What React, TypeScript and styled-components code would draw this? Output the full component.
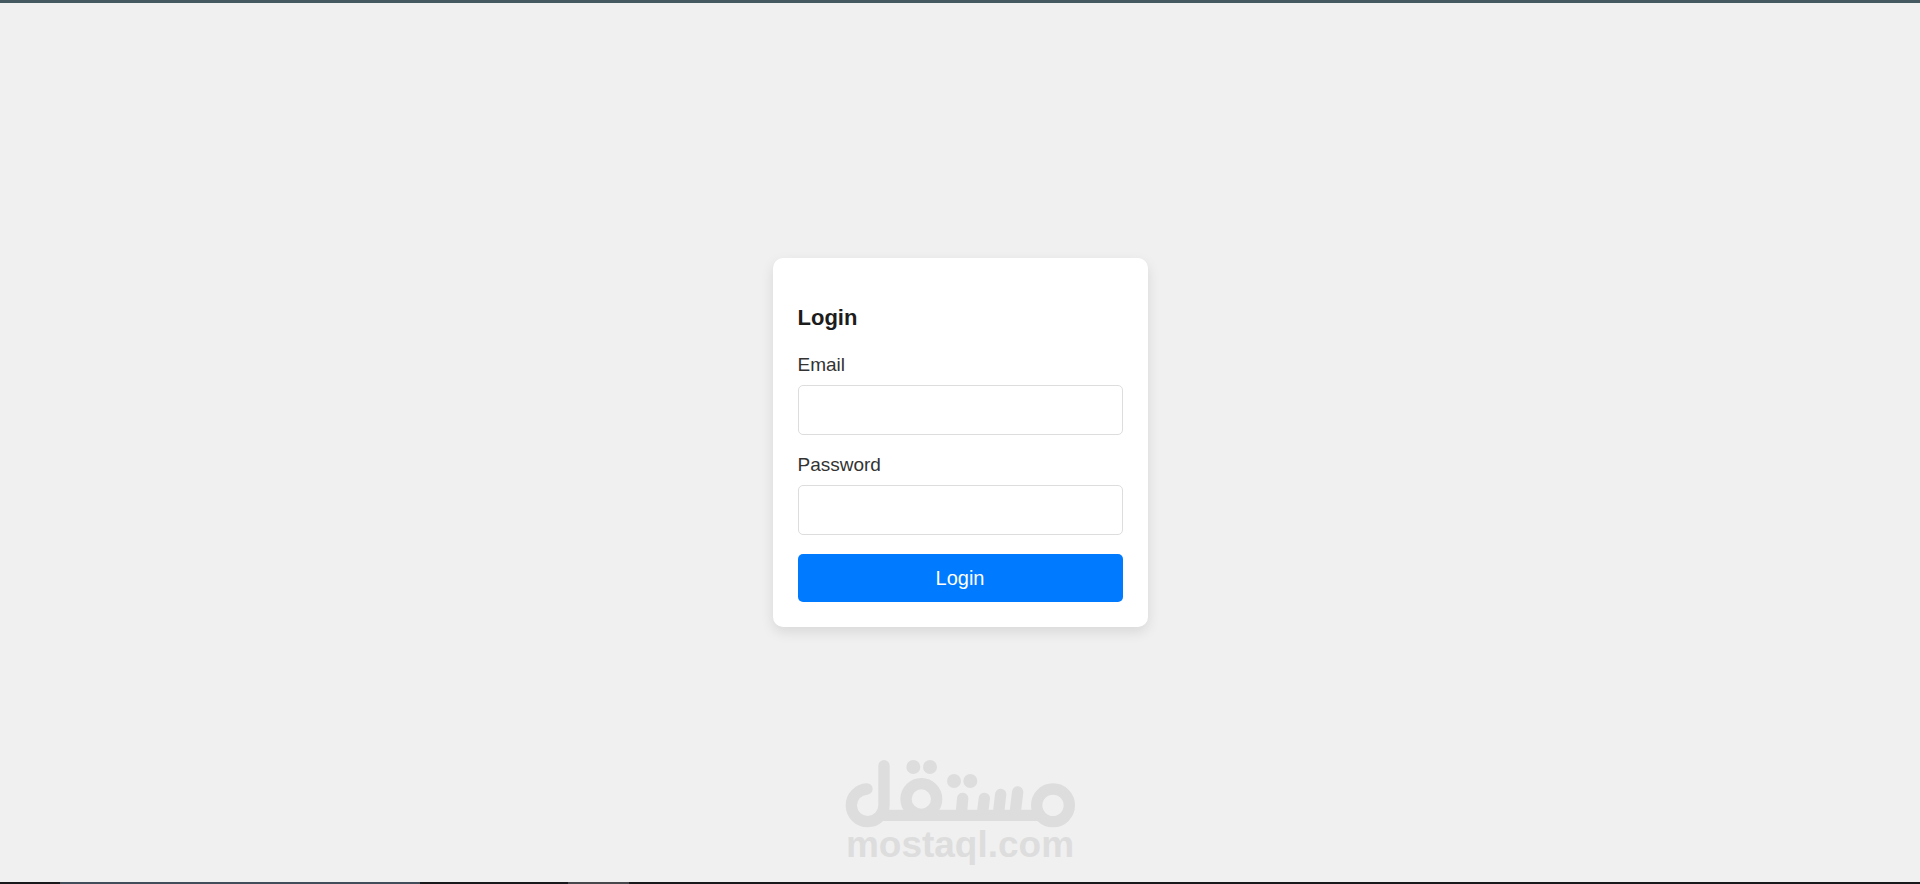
import React from "react";
import styled, { createGlobalStyle } from "styled-components";

const GlobalStyle = createGlobalStyle`
  *, *::before, *::after { box-sizing: border-box; }
  body {
    margin: 0;
    background: #f0f0f0;
    font-family: "Liberation Sans", Arial, sans-serif;
  }
`;

const Page = styled.div`
  position: relative;
  display: flex;
  flex-direction: column;
  min-height: 100vh;
`;

const TopBar = styled.div`
  height: 3px;
  background: #455a60;
`;

const BottomBar = styled.div`
  display: flex;
  height: 2px;
  background: #19191b;
`;

const Segment = styled.span<{ $width: number; $color: string }>`
  width: ${(p) => p.$width}px;
  background: ${(p) => p.$color};
`;

const Main = styled.main`
  flex: 1;
  display: flex;
  align-items: center;
  justify-content: center;
`;

const Card = styled.form`
  display: flex;
  flex-direction: column;
  width: 375px;
  max-width: 100%;
  padding: 48px 25px 25px;
  border-radius: 10px;
  background: #fff;
  box-shadow: 0 5px 13px rgba(0, 0, 0, 0.1);
`;

const Title = styled.h1`
  margin: 0 0 24px;
  font-size: 22px;
  line-height: 24px;
  color: #1c1c1c;
`;

const Field = styled.div`
  display: flex;
  flex-direction: column;
  gap: 10px;
  margin-bottom: 19px;
`;

const Label = styled.label`
  font-size: 19px;
  line-height: 21px;
  color: #333;
`;

const Input = styled.input`
  width: 100%;
  height: 50px;
  padding: 12px;
  border: 1px solid #ddd;
  border-radius: 5px;
  background: #fff;
  font: inherit;
  font-size: 19px;
`;

const SubmitButton = styled.button`
  height: 48px;
  border: 0;
  border-radius: 5px;
  background: #007bff;
  color: #fff;
  font: inherit;
  font-size: 20px;
  cursor: pointer;
`;

const Watermark = styled.div`
  position: absolute;
  bottom: 22px;
  left: 50%;
  transform: translateX(-50%);
  display: flex;
  flex-direction: column;
  align-items: center;
  color: #ddd;
  pointer-events: none;
`;

const WatermarkText = styled.span`
  font-size: 37px;
  font-weight: 700;
  line-height: 34px;
`;

const Logo = () => (
  <svg width="230" height="68" viewBox="45 45 690 204" aria-hidden="true">
    <g fill="none" stroke="currentColor" strokeWidth="34" strokeLinecap="round">
      <path d="M111 132A49 49 0 1 0 162 181V62" />
      <circle cx="274" cy="162" r="46" />
      <circle cx="669" cy="181" r="49" />
      <path d="M160 211H630" />
      <path d="M398 160L394 208M463 160L457 208M512 148L505 208M563 141L555 208" />
    </g>
    <g fill="currentColor">
      <circle cx="250" cy="66" r="21" />
      <circle cx="300" cy="66" r="21" />
      <circle cx="372" cy="108" r="21" />
      <circle cx="421" cy="108" r="21" />
    </g>
  </svg>
);

export default function App() {
  return (
    <Page>
      <GlobalStyle />
      <TopBar />
      <Main>
        <Card onSubmit={(e: React.FormEvent) => e.preventDefault()}>
          <Title>Login</Title>
          <Field>
            <Label htmlFor="email">Email</Label>
            <Input id="email" type="email" />
          </Field>
          <Field>
            <Label htmlFor="password">Password</Label>
            <Input id="password" type="password" />
          </Field>
          <SubmitButton type="submit">Login</SubmitButton>
        </Card>
      </Main>
      <Watermark>
        <Logo />
        <WatermarkText>mostaql.com</WatermarkText>
      </Watermark>
      <BottomBar>
        <Segment $width={60} $color="#19191b" />
        <Segment $width={360} $color="#414e5a" />
        <Segment $width={148} $color="#19191b" />
        <Segment $width={61} $color="#46484c" />
      </BottomBar>
    </Page>
  );
}
